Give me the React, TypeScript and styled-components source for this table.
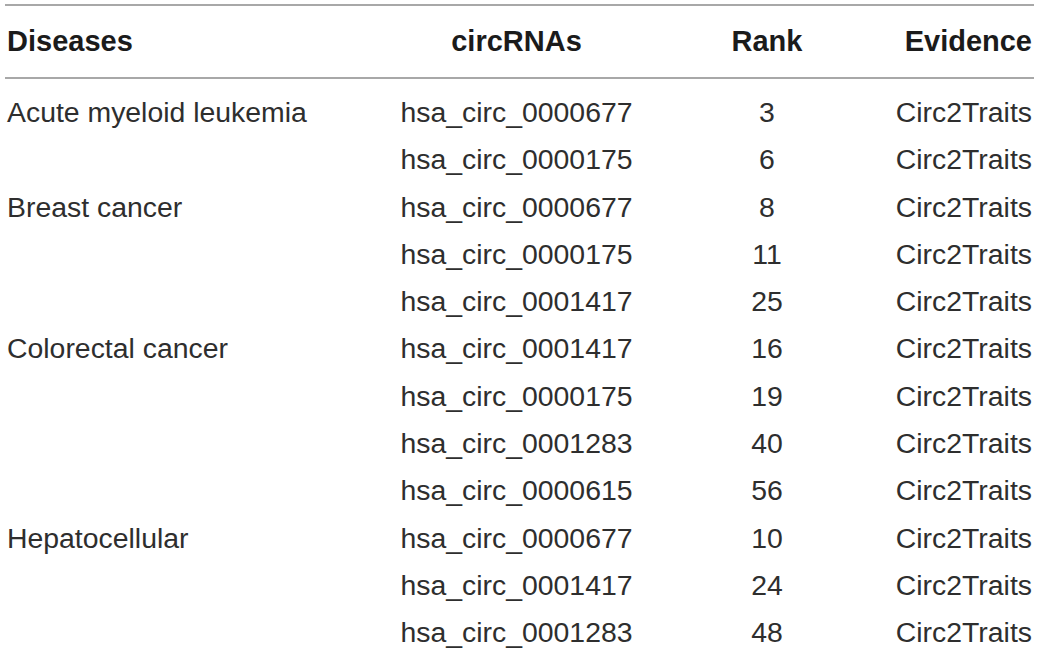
import React from "react";
import styled, { createGlobalStyle } from "styled-components";

const GlobalStyle = createGlobalStyle`
  html, body {
    margin: 0;
    padding: 0;
    background: #ffffff;
  }
  body {
    font-family: "Liberation Sans", Arial, Helvetica, sans-serif;
  }
`;

const Page = styled.div`
  width: 1040px;
  height: 652px;
  padding: 4px 6px 0 5px;
  box-sizing: border-box;
  overflow: hidden;
`;

const Table = styled.div`
  display: flex;
  flex-direction: column;
`;

const Row = styled.div<{ $header?: boolean }>`
  display: grid;
  grid-template-columns: 395px 233px 260px 1fr;
  align-items: center;
  height: ${(p) => (p.$header ? "71px" : "47.27px")};
  font-size: ${(p) => (p.$header ? "29px" : "28.4px")};
  font-weight: ${(p) => (p.$header ? 700 : 400)};
  color: ${(p) => (p.$header ? "#1b1b1b" : "#2e2e2e")};
  ${(p) =>
    p.$header
      ? `border-top: 2px solid #a8a8a8; border-bottom: 2px solid #a8a8a8;`
      : ""}
`;

const Body = styled.div`
  display: flex;
  flex-direction: column;
  padding-top: 10px;
`;

const Cell = styled.div<{ $align: "left" | "center" | "right" }>`
  text-align: ${(p) => p.$align};
  white-space: nowrap;
  padding-left: ${(p) => (p.$align === "left" ? "2px" : "0")};
  padding-right: ${(p) => (p.$align === "right" ? "2px" : "0")};
`;

const RankCell = styled(Cell)`
  padding-left: 8px;
`;

type Entry = { disease: string; circ: string; rank: number };

const rows: Entry[] = [
  { disease: "Acute myeloid leukemia", circ: "hsa_circ_0000677", rank: 3 },
  { disease: "", circ: "hsa_circ_0000175", rank: 6 },
  { disease: "Breast cancer", circ: "hsa_circ_0000677", rank: 8 },
  { disease: "", circ: "hsa_circ_0000175", rank: 11 },
  { disease: "", circ: "hsa_circ_0001417", rank: 25 },
  { disease: "Colorectal cancer", circ: "hsa_circ_0001417", rank: 16 },
  { disease: "", circ: "hsa_circ_0000175", rank: 19 },
  { disease: "", circ: "hsa_circ_0001283", rank: 40 },
  { disease: "", circ: "hsa_circ_0000615", rank: 56 },
  { disease: "Hepatocellular", circ: "hsa_circ_0000677", rank: 10 },
  { disease: "", circ: "hsa_circ_0001417", rank: 24 },
  { disease: "", circ: "hsa_circ_0001283", rank: 48 },
];

export default function App() {
  return (
    <>
      <GlobalStyle />
      <Page>
        <Table>
          <Row $header>
            <Cell $align="left">Diseases</Cell>
            <Cell $align="center">circRNAs</Cell>
            <RankCell $align="center">Rank</RankCell>
            <Cell $align="right">Evidence</Cell>
          </Row>
          <Body>
            {rows.map((r, i) => (
              <Row key={i}>
                <Cell $align="left">{r.disease}</Cell>
                <Cell $align="center">{r.circ}</Cell>
                <RankCell $align="center">{r.rank}</RankCell>
                <Cell $align="right">Circ2Traits</Cell>
              </Row>
            ))}
          </Body>
        </Table>
      </Page>
    </>
  );
}
